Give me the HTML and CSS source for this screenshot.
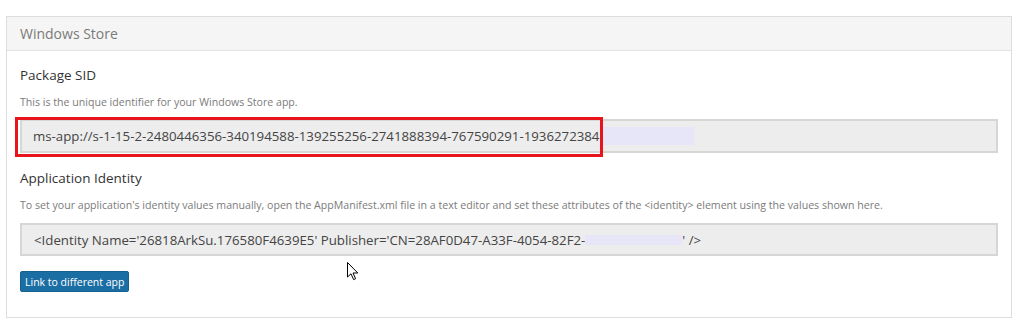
FILE: index.html
```html
<html>
  <head>
    <title>Windows Store</title>
    <link rel="stylesheet" href="styles.css">
  </head>
  <body>
    <div class="panel">
      <div class="panel-heading">Windows Store</div>
      <div class="panel-body">
        <h3 class="field-title">Package SID</h3>
        <p class="field-help">This is the unique identifier for your Windows Store app.</p>
        <div class="field-box sid-box">
          <span>ms-app://s-1-15-2-2480446356-340194588-139255256-2741888394-767590291-1936272384</span>
          <span class="blur blur-sid"></span>
          <div class="highlight"></div>
        </div>

        <h3 class="field-title second">Application Identity</h3>
        <p class="field-help">To set your application's identity values manually, open the AppManifest.xml file in a text editor and set these attributes of the &lt;identity&gt; element using the values shown here.</p>
        <div class="field-box identity-box">
          <span>&lt;Identity Name='26818ArkSu.176580F4639E5' Publisher='CN=28AF0D47-A33F-4054-82F2-</span><span class="blur blur-pub"></span><span>' /&gt;</span>
        </div>

        <button class="link-btn">Link to different app</button>
        <svg class="cursor" width="12" height="19" viewBox="0 0 12 19">
          <path d="M0.5 0.5 L0.5 15 L4 11.8 L6.6 17.6 L8.6 16.7 L6 11 L10.8 11 Z" fill="#fff" stroke="#000" stroke-width="1" stroke-linejoin="round"/>
        </svg>
      </div>
    </div>
  </body>
</html>
```

FILE: styles.css
```css
* {
  box-sizing: border-box;
  margin: 0;
  padding: 0;
}
body {
  background-color: #fff;
  padding: 16px 12px 0 6px;
  font-family: "Open Sans", "Noto Sans", sans-serif;
}
.panel {
  border: 1px solid #dddddd;
  width: 1006px;
  height: 302px;
  background-color: #fff;
}
.panel-heading {
  background-color: #f5f5f5;
  border-bottom: 1px solid #e3e3e3;
  height: 34px;
  line-height: 33px;
  padding-left: 13px;
  font-size: 14px;
  color: #7a7a7a;
}
.panel-body {
  position: relative;
  padding: 14px 13px 0 13px;
}
.field-title {
  font-weight: normal;
  font-size: 13.5px;
  line-height: 20px;
  color: #333;
}
.field-title.second {
  margin-top: 15px;
}
.field-help {
  margin-top: 9px;
  font-size: 10.6px;
  line-height: 16px;
  color: #7b7b7b;
}
.field-box {
  position: relative;
  display: flex;
  align-items: center;
  margin-top: 9px;
  height: 34px;
  padding-left: 11px;
  background-color: #ededed;
  border: 2px solid #d6d6d6;
  font-size: 13.25px;
  color: #444;
  white-space: nowrap;
}
.identity-box {
  margin-top: 10px;
  height: 33px;
  padding-left: 12px;
}
.blur {
  display: inline-block;
  background-color: #e6e6f8;
}
.blur-sid {
  width: 93px;
  height: 18px;
  margin-left: 2px;
}
.blur-pub {
  width: 97px;
  height: 10px;
}
.highlight {
  position: absolute;
  left: -7px;
  top: -4px;
  width: 588px;
  height: 40px;
  border: 3px solid #e8141c;
}
.link-btn {
  display: block;
  margin-top: 15px;
  height: 21px;
  padding: 0 4px;
  background-color: #1b6ea3;
  border: 1px solid #16618f;
  border-radius: 2px;
  color: #fff;
  font-family: "Open Sans", "Noto Sans", sans-serif;
  font-size: 10.5px;
}
.cursor {
  position: absolute;
  left: 340px;
  top: 211px;
}
```
